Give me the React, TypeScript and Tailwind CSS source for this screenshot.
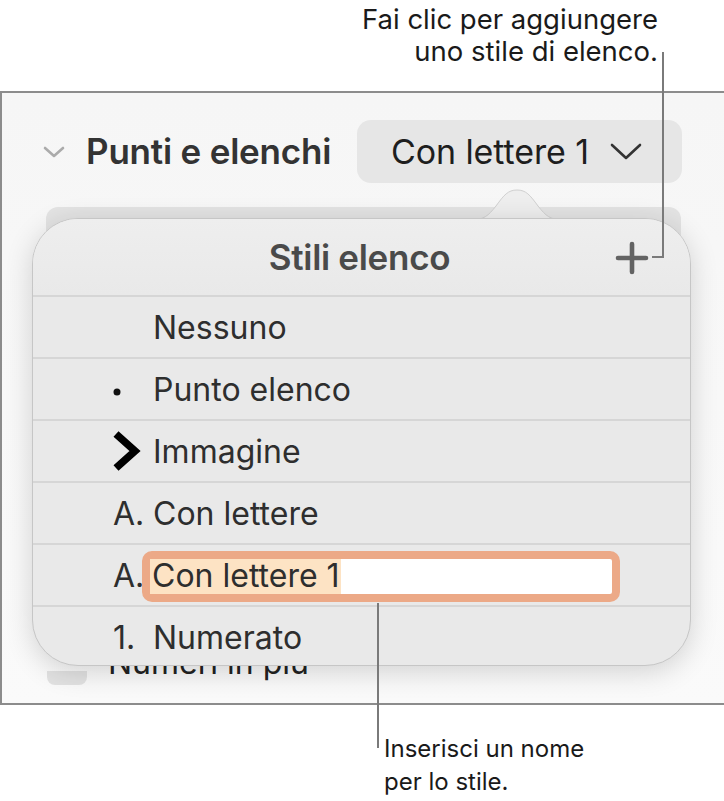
const rows = [
  { marker: '', label: 'Nessuno' },
  { marker: 'dot', label: 'Punto elenco' },
  { marker: 'chevron', label: 'Immagine' },
  { marker: 'A.', label: 'Con lettere' },
  { marker: 'field', label: 'Con lettere 1' },
  { marker: '1.', label: 'Numerato' },
]

function Marker({ kind }: { kind: string }) {
  if (kind === 'dot') {
    return (
      <svg width="40" height="20" viewBox="0 0 40 20">
        <circle cx="4" cy="12" r="3.5" fill="#111" />
      </svg>
    )
  }
  if (kind === 'chevron') {
    return (
      <svg width="40" height="44" viewBox="0 0 40 44">
        <polyline points="3,4 22,21 3,38" fill="none" stroke="#000" strokeWidth="7.5" strokeLinejoin="miter" />
      </svg>
    )
  }
  return <span>{kind}</span>
}

export default function App() {
  return (
    <div className="relative w-[724px] h-[801px] overflow-hidden bg-white font-['Inter',sans-serif] text-[#1a1a1a]">
      {/* Top callout */}
      <div className="h-[91px] pt-[3px] pr-[66px] text-right text-[27.5px] leading-[32px]">
        <p>Fai clic per aggiungere</p>
        <p>uno stile di elenco.</p>
      </div>

      {/* Sidebar panel */}
      <div className="h-[614px] border-t-2 border-l-2 border-b-2 border-[#8c8c8c] bg-gradient-to-b from-[#f6f6f6] to-[#fafafa]">
        <div className="flex items-center pt-[27px]">
          <svg className="ml-[41px]" width="22" height="12" viewBox="0 0 22 12">
            <polyline points="2,2 11,10 20,2" fill="none" stroke="#ababab" strokeWidth="2.6" strokeLinecap="round" strokeLinejoin="round" />
          </svg>
          <span className="ml-[21px] text-[35px] font-semibold tracking-[-0.2px] text-[#333]">Punti e elenchi</span>
          <div className="ml-auto mr-[42px] flex h-[63px] w-[325px] items-center rounded-[14px] bg-[#e6e6e6] pl-[34px]">
            <span className="text-[34px] tracking-[-0.1px] text-[#1e1e1e]">Con lettere 1</span>
            <svg className="ml-[21px]" width="32" height="18" viewBox="0 0 32 18">
              <polyline points="2,2 16,15 30,2" fill="none" stroke="#333" strokeWidth="2.6" strokeLinecap="round" strokeLinejoin="round" />
            </svg>
          </div>
        </div>
        <div className="ml-[44px] mt-[24px] h-[60px] w-[635px] rounded-[12px] bg-[#e3e3e3]" />
        <div className="ml-[45px] mt-[399px] flex items-end">
          <div className="h-[14px] w-[40px] rounded-b-[8px] bg-[#e2e2e2]" />
          <div className="ml-[21px] h-[19px] overflow-hidden">
            <p className="-mt-[23px] text-[32px] leading-[40px] text-[#222]">Numeri in più</p>
          </div>
        </div>
      </div>

      {/* Bottom callout */}
      <div className="pl-[384px] pt-[27px] text-[24px] leading-[33px]">
        <p>Inserisci un nome</p>
        <p>per lo stile.</p>
      </div>

      {/* Popover arrow */}
      <svg className="absolute left-[470px] top-[186px]" width="94" height="36" viewBox="0 0 94 36">
        <path d="M0,34 C14,34 18,30 26,20 C34,9 38,4 47,4 C56,4 60,9 68,20 C76,30 80,34 94,34 L94,36 L0,36 Z" fill="#eeeeee" />
        <path d="M0,34 C14,34 18,30 26,20 C34,9 38,4 47,4 C56,4 60,9 68,20 C76,30 80,34 94,34" fill="none" stroke="#d0d0d0" strokeWidth="1" />
      </svg>

      {/* Popover */}
      <div className="absolute left-[32px] top-[218px] h-[448px] w-[659px] overflow-hidden rounded-[46px] border border-[#c6c6c6] bg-[#e9e9e9] shadow-[0_6px_28px_rgba(0,0,0,0.16)]">
        <div className="relative flex h-[76px] items-center justify-center bg-gradient-to-b from-[#eeeeee] to-[#e9e9e9]">
          <span className="mr-[4px] text-[35px] font-semibold tracking-[-0.3px] text-[#4a4a4a]">Stili elenco</span>
          <svg className="absolute left-[582px] top-[22px]" width="34" height="34" viewBox="0 0 34 34">
            <path d="M17 3 V31 M3 17 H31" stroke="#636363" strokeWidth="4.6" strokeLinecap="round" />
          </svg>
        </div>
        {rows.map((r) => (
          <div key={r.label} className="flex h-[62px] items-center border-t-2 border-[#d6d6d6] pl-[80px] pt-[2px] text-[32px] text-[#2e2e2e]">
            {r.marker === 'field' ? (
              <>
                <span className="w-[29px]">A.</span>
                <div className="flex h-[51px] w-[478px] items-center rounded-[10px] border-[8px] border-[#eca987] bg-white">
                  <span className="flex h-full items-center bg-[#fde3c4] pl-[2px] pr-[1px]">{r.label}</span>
                </div>
              </>
            ) : (
              <>
                <span className="flex w-[40px] items-center">
                  <Marker kind={r.marker} />
                </span>
                <span>{r.label}</span>
              </>
            )}
          </div>
        ))}
      </div>

      {/* Callout lines */}
      <div className="absolute left-[662px] top-[52px] h-[206px] w-[2px] bg-[#7a7a7a]" />
      <div className="absolute left-[652px] top-[256px] h-[2px] w-[11px] bg-[#7a7a7a]" />
      <div className="absolute left-[377px] top-[603px] h-[145px] w-[2px] bg-[#7a7a7a]" />
    </div>
  )
}
